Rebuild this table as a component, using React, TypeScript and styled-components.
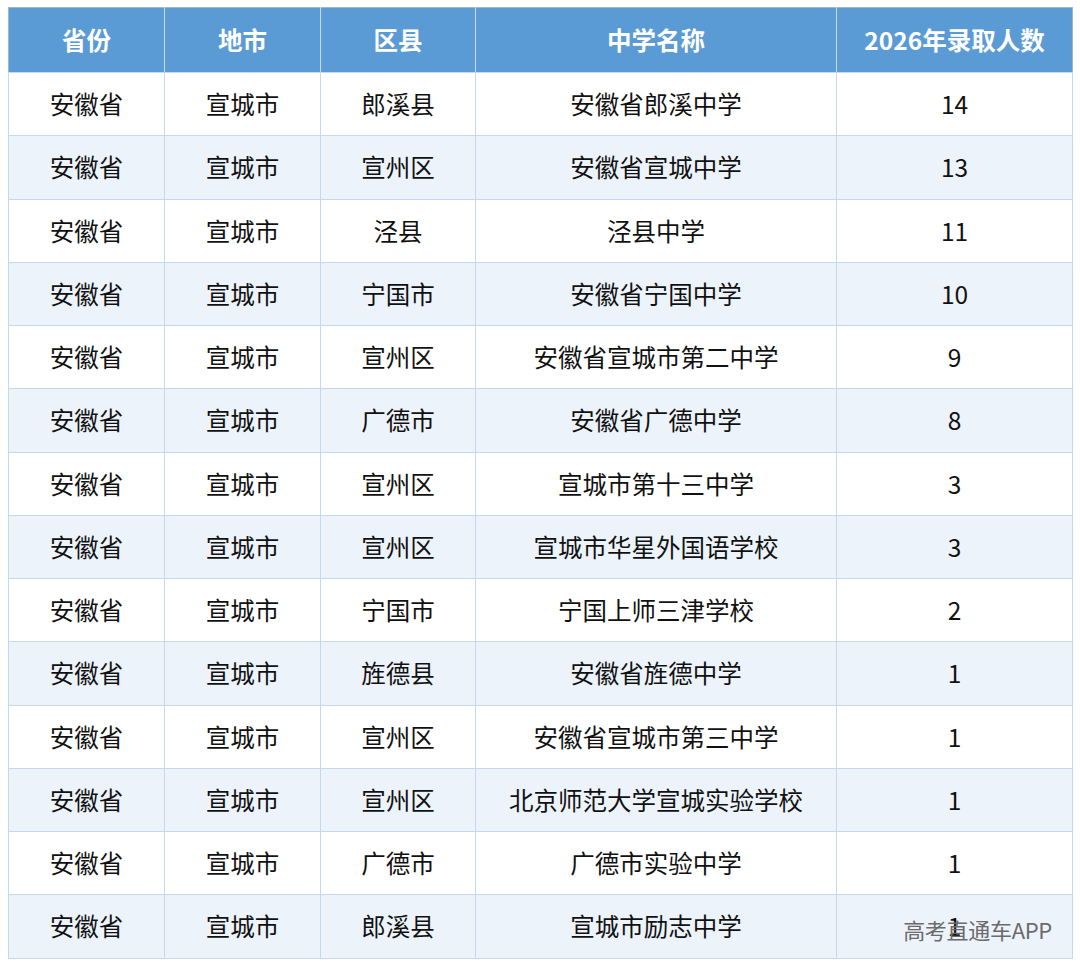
import React from 'react'
import styled, { createGlobalStyle } from 'styled-components'

const rows: [string, string, string, string, number][] = [
  ['安徽省', '宣城市', '郎溪县', '安徽省郎溪中学', 14],
  ['安徽省', '宣城市', '宣州区', '安徽省宣城中学', 13],
  ['安徽省', '宣城市', '泾县', '泾县中学', 11],
  ['安徽省', '宣城市', '宁国市', '安徽省宁国中学', 10],
  ['安徽省', '宣城市', '宣州区', '安徽省宣城市第二中学', 9],
  ['安徽省', '宣城市', '广德市', '安徽省广德中学', 8],
  ['安徽省', '宣城市', '宣州区', '宣城市第十三中学', 3],
  ['安徽省', '宣城市', '宣州区', '宣城市华星外国语学校', 3],
  ['安徽省', '宣城市', '宁国市', '宁国上师三津学校', 2],
  ['安徽省', '宣城市', '旌德县', '安徽省旌德中学', 1],
  ['安徽省', '宣城市', '宣州区', '安徽省宣城市第三中学', 1],
  ['安徽省', '宣城市', '宣州区', '北京师范大学宣城实验学校', 1],
  ['安徽省', '宣城市', '广德市', '广德市实验中学', 1],
  ['安徽省', '宣城市', '郎溪县', '宣城市励志中学', 1],
]

const headers = ['省份', '地市', '区县', '中学名称', '2026年录取人数']

const GlobalStyle = createGlobalStyle`
  body {
    margin: 0;
    background: #fff;
    font-family: "Noto Sans CJK SC", "Noto Sans", sans-serif;
  }
`

const Page = styled.div`
  padding: 7px 8px 0 8px;
  width: 1064px;
`

const Frame = styled.div`
  position: relative;
`

const Table = styled.table`
  width: 1064px;
  border-collapse: collapse;
  table-layout: fixed;
  border: 1px solid #9fb8d2;
`

const Col = styled.col<{ $w: number }>`
  width: ${(p) => p.$w}px;
`

const HeadCell = styled.th`
  height: 64px;
  padding: 0;
  line-height: 28px;
  background: #5b9bd5;
  color: #fff;
  font-size: 24.5px;
  font-weight: 700;
  text-align: center;
  border-left: 1px solid #c9dcef;
  &:first-child {
    border-left: none;
  }
`

const Row = styled.tr<{ $alt: boolean }>`
  background: ${(p) => (p.$alt ? '#edf3fb' : '#fff')};
`

const Cell = styled.td`
  height: 62.25px;
  padding: 0;
  line-height: 28px;
  font-size: 24.5px;
  color: #111;
  text-align: center;
  border: 1px solid #c5d9ee;
`

const Watermark = styled.div`
  position: absolute;
  right: 20px;
  bottom: 16px;
  font-size: 22px;
  line-height: 28px;
  color: #6b6b6b;
  letter-spacing: -0.3px;
`

export default function App() {
  const widths = [156, 156, 155, 361, 236]
  return (
    <Page>
      <GlobalStyle />
      <Frame>
        <Table>
          <colgroup>
            {widths.map((w, i) => (
              <Col key={i} $w={w} />
            ))}
          </colgroup>
          <thead>
            <tr>
              {headers.map((h) => (
                <HeadCell key={h}>{h}</HeadCell>
              ))}
            </tr>
          </thead>
          <tbody>
            {rows.map((r, i) => (
              <Row key={i} $alt={i % 2 === 1}>
                {r.map((c, j) => (
                  <Cell key={j}>{c}</Cell>
                ))}
              </Row>
            ))}
          </tbody>
        </Table>
        <Watermark>高考直通车APP</Watermark>
      </Frame>
    </Page>
  )
}
